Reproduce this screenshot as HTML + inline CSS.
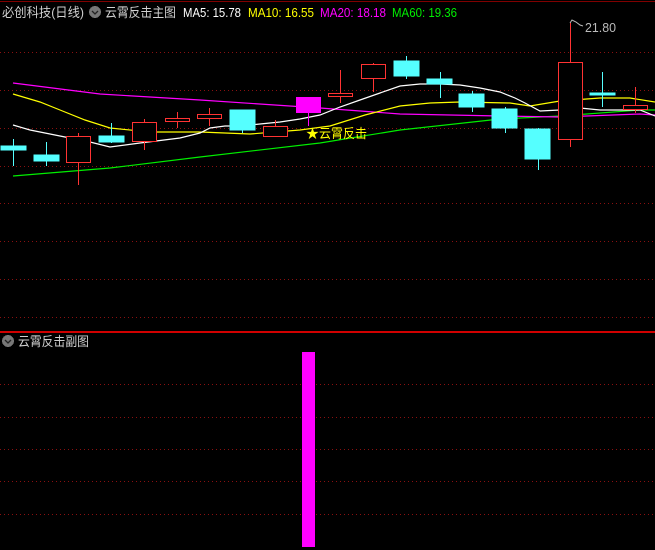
<!DOCTYPE html>
<html><head><meta charset="utf-8"><style>
html,body{margin:0;padding:0;background:#000;width:655px;height:550px;overflow:hidden}
svg{display:block}
text{font-family:"Liberation Sans","Noto Sans CJK SC",sans-serif}
</style></head><body>
<svg width="655" height="550" viewBox="0 0 655 550" xmlns="http://www.w3.org/2000/svg" shape-rendering="crispEdges">
<rect width="655" height="550" fill="#000"/>
<line x1="0" y1="1.5" x2="655" y2="1.5" stroke="#800000"/>
<g stroke="#8a1010" stroke-dasharray="1,3">
<line x1="0" y1="52.5" x2="655" y2="52.5"/><line x1="0" y1="90.5" x2="655" y2="90.5"/>
<line x1="0" y1="128.5" x2="655" y2="128.5"/><line x1="0" y1="166.5" x2="655" y2="166.5"/>
<line x1="0" y1="203.5" x2="655" y2="203.5"/><line x1="0" y1="241.5" x2="655" y2="241.5"/>
<line x1="0" y1="279.5" x2="655" y2="279.5"/><line x1="0" y1="317.5" x2="655" y2="317.5"/>
<line x1="0" y1="384.5" x2="655" y2="384.5"/><line x1="0" y1="417.5" x2="655" y2="417.5"/>
<line x1="0" y1="449.5" x2="655" y2="449.5"/><line x1="0" y1="481.5" x2="655" y2="481.5"/>
<line x1="0" y1="514.5" x2="655" y2="514.5"/>
</g>
<line x1="0" y1="332" x2="655" y2="332" stroke="#d00000" stroke-width="2"/>
<g fill="none" stroke-width="1.2" shape-rendering="auto">
<polyline stroke="#00ee00" points="13,176 110,168 200,157 320,143 400,130 500,119 560,116 640,110 655,110"/>
<polyline stroke="#ff00ff" points="13,83 100,94 200,100 320,108 400,114 500,116 560,117 640,114 655,115"/>
<polyline stroke="#ffff00" points="13,94 40,102 60,110 85,120 110,128 150,132 200,132 250,134 300,130 330,126 365,115 400,106 430,103 460,102 510,103 530,106 560,101 600,98 630,98 655,102"/>
<polyline stroke="#ffffff" points="13,125 30,130 50,134 70,138 90,142 110,147 140,143 180,138 200,133 210,128 225,126 240,126 260,124 280,122 300,119 320,115 340,107 360,100 380,93 400,86 420,84 440,84 460,85 480,88 500,92 515,98 525,103 540,111 560,110 580,108 600,110 620,110 640,110 655,116"/>
</g>
<g fill="#55ffff" stroke="#55ffff">
<line x1="13.5" y1="139" x2="13.5" y2="166"/><rect x="1" y="146" width="25" height="4"/>
<line x1="46.5" y1="142" x2="46.5" y2="166"/><rect x="34" y="155" width="25" height="6"/>
<line x1="111.5" y1="123" x2="111.5" y2="143"/><rect x="99" y="136" width="25" height="6"/>
<line x1="242.5" y1="128" x2="242.5" y2="133"/><rect x="230" y="110" width="25" height="20"/>
<line x1="406.5" y1="56" x2="406.5" y2="79"/><rect x="394" y="61" width="25" height="15"/>
<line x1="440.5" y1="72" x2="440.5" y2="98"/><rect x="427" y="79" width="25" height="5"/>
<line x1="472.5" y1="91" x2="472.5" y2="112"/><rect x="459" y="94" width="25" height="13"/>
<line x1="505.5" y1="107" x2="505.5" y2="133"/><rect x="492" y="109" width="25" height="19"/>
<line x1="538.5" y1="128" x2="538.5" y2="170"/><rect x="525" y="129" width="25" height="30"/>
<line x1="602.5" y1="72" x2="602.5" y2="107"/><rect x="590" y="93" width="25" height="2"/>
</g>
<g stroke="#ff3333" fill="#000">
<line x1="78.5" y1="133" x2="78.5" y2="185"/><rect x="66.5" y="136.5" width="24" height="26"/>
<line x1="144.5" y1="119" x2="144.5" y2="150"/><rect x="132.5" y="122.5" width="24" height="19"/>
<line x1="177.5" y1="112" x2="177.5" y2="128"/><rect x="165.5" y="118.5" width="24" height="3"/>
<line x1="209.5" y1="108" x2="209.5" y2="126"/><rect x="197.5" y="114.5" width="24" height="4"/>
<line x1="275.5" y1="120" x2="275.5" y2="136"/><rect x="263.5" y="126.5" width="24" height="10"/>
<line x1="340.5" y1="70" x2="340.5" y2="103"/><rect x="328.5" y="93.5" width="24" height="3"/>
<line x1="373.5" y1="63" x2="373.5" y2="92"/><rect x="361.5" y="64.5" width="24" height="14"/>
<line x1="570.5" y1="23" x2="570.5" y2="147"/><rect x="558.5" y="62.5" width="24" height="77"/>
<line x1="635.5" y1="87" x2="635.5" y2="113"/><rect x="623.5" y="105.5" width="24" height="4"/>
</g>
<line x1="308.5" y1="113" x2="308.5" y2="126" stroke="#ff00ff"/>
<rect x="296" y="97" width="25" height="16" fill="#ff00ff"/>
<polyline points="570,23 572,20 576,22 580,25 583,26" fill="none" stroke="#bbbbbb" shape-rendering="auto"/>
<text x="585" y="32" fill="#bbbbbb" font-size="13" textLength="31" lengthAdjust="spacingAndGlyphs">21.80</text>
<text x="306" y="138" fill="#ffff00" font-size="13">★</text>
<text x="319" y="138" fill="#ffff00" font-size="13" textLength="48" lengthAdjust="spacingAndGlyphs">云霄反击</text>
<rect x="302" y="352" width="13" height="195" fill="#ff00ff"/>
<g font-size="13">
<text x="2" y="17" fill="#d0d0d0" textLength="82" lengthAdjust="spacingAndGlyphs">必创科技(日线)</text>
<circle cx="95" cy="12" r="6" fill="#777"/>
<polyline points="92,11 95,14 98,11" fill="none" stroke="#222" stroke-width="1.3" shape-rendering="auto"/>
<text x="105" y="17" fill="#d0d0d0" textLength="71" lengthAdjust="spacingAndGlyphs">云霄反击主图</text>
<text x="183" y="17" fill="#ffffff" textLength="58" lengthAdjust="spacingAndGlyphs">MA5: 15.78</text>
<text x="248" y="17" fill="#ffff00" textLength="66" lengthAdjust="spacingAndGlyphs">MA10: 16.55</text>
<text x="320" y="17" fill="#ff00ff" textLength="66" lengthAdjust="spacingAndGlyphs">MA20: 18.18</text>
<text x="392" y="17" fill="#00ee00" textLength="65" lengthAdjust="spacingAndGlyphs">MA60: 19.36</text>
<circle cx="8" cy="341" r="6" fill="#777"/>
<polyline points="5,340 8,343 11,340" fill="none" stroke="#222" stroke-width="1.3" shape-rendering="auto"/>
<text x="18" y="346" fill="#d0d0d0" textLength="71" lengthAdjust="spacingAndGlyphs">云霄反击副图</text>
</g>
</svg>
</body></html>
